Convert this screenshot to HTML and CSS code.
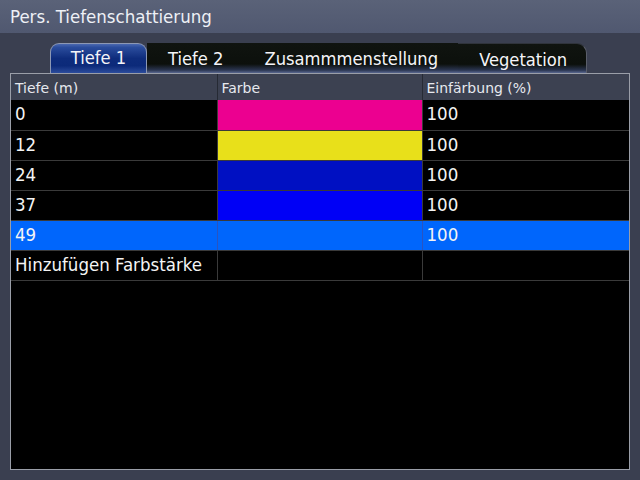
FILE: index.html
```html
<!DOCTYPE html>
<html>
<head>
<meta charset="utf-8">
<link rel="stylesheet" href="styles.css">
</head>
<body>
<div class="titlebar">Pers. Tiefenschattierung</div>
<div class="main">
  <div class="tabs">
    <div class="tab active">Tiefe 1</div>
    <div class="tab">Tiefe 2</div>
    <div class="tab">Zusammmenstellung</div>
    <div class="tab last">Vegetation</div>
  </div>
  <div class="panel">
    <table class="grid">
      <thead>
        <tr><th>Tiefe (m)</th><th>Farbe</th><th>Einfärbung (%)</th></tr>
      </thead>
      <tbody>
        <tr><td>0</td><td class="c-magenta"></td><td>100</td></tr>
        <tr><td>12</td><td class="c-yellow"></td><td>100</td></tr>
        <tr><td>24</td><td class="c-navy"></td><td>100</td></tr>
        <tr><td>37</td><td class="c-blue"></td><td>100</td></tr>
        <tr class="sel"><td>49</td><td></td><td>100</td></tr>
        <tr><td>Hinzufügen Farbstärke</td><td></td><td></td></tr>
      </tbody>
    </table>
  </div>
</div>
</body>
</html>
```
FILE: styles.css
```css
html, body {
  margin: 0;
  padding: 0;
}
body {
  width: 640px;
  height: 480px;
  overflow: hidden;
  background: #3a3f50;
  font-family: "DejaVu Sans Condensed", "DejaVu Sans", sans-serif;
  color: #f0f0f4;
}
.titlebar {
  height: 33px;
  box-sizing: border-box;
  padding: 5px 0 0 10px;
  background: linear-gradient(#5a6278, #505870);
  font-size: 18.5px;
  line-height: 24px;
  color: #eef0f6;
}
.main {
  display: flex;
  flex-direction: column;
  padding: 10px 10px 0 10px;
}
.tabs {
  display: flex;
  margin-left: 40px;
  height: 30px;
}
.tab {
  padding: 0 20px 0 21px;
  font-size: 18.2px;
  line-height: 32px;
  color: #f4f4f8;
  background: linear-gradient(#101410 0, #0c100c 70%, #2a3550 90%, #5a6890 100%);
}
.tab.active {
  width: 97px;
  box-sizing: border-box;
  text-align: center;
  padding: 0;
  border: 1px solid #8c98b4;
  border-bottom: none;
  border-radius: 9px 9px 0 0;
  line-height: 28px;
  background: linear-gradient(#4a68b0 0, #2a4c9c 12%, #0e2c7c 50%, #0c2a7a 75%, #2c4c9c 100%);
}
.tab.last {
  border-radius: 0 10px 0 0;
  border-top: 1px solid #30343c;
  border-right: 1px solid #5a5e6a;
  padding-right: 19px;
}
.panel {
  height: 397px;
  box-sizing: border-box;
  border: 1px solid #9a9ea8;
  background: #000;
}
.grid {
  width: 100%;
  border-collapse: collapse;
  table-layout: fixed;
}
.grid th:nth-child(1) { width: 206px; }
.grid th:nth-child(2) { width: 205px; }
.grid th {
  height: 26px;
  box-sizing: border-box;
  padding: 1px 0 0 4px;
  background: #3c4151;
  font-family: "DejaVu Sans", sans-serif;
  font-weight: normal;
  text-align: left;
  font-size: 14px;
  color: #e6e8ee;
  border-left: 1px solid #262a34;
}
.grid th:first-child, .grid td:first-child {
  border-left: none;
}
.grid td {
  height: 30px;
  box-sizing: border-box;
  padding: 0 0 2px 4px;
  font-size: 18.5px;
  color: #f4f4f4;
  border-left: 1px solid #3a3a3a;
  border-bottom: 1px solid #3a3a3a;
  vertical-align: middle;
}
.grid td.c-magenta { background: #ec0090; }
.grid td.c-yellow { background: #e8e01a; }
.grid td.c-navy { background: #0010c2; }
.grid td.c-blue { background: #0000f6; }
.grid tr.sel td { background: #0066fc; border-left-color: #2a54c0; }
```
